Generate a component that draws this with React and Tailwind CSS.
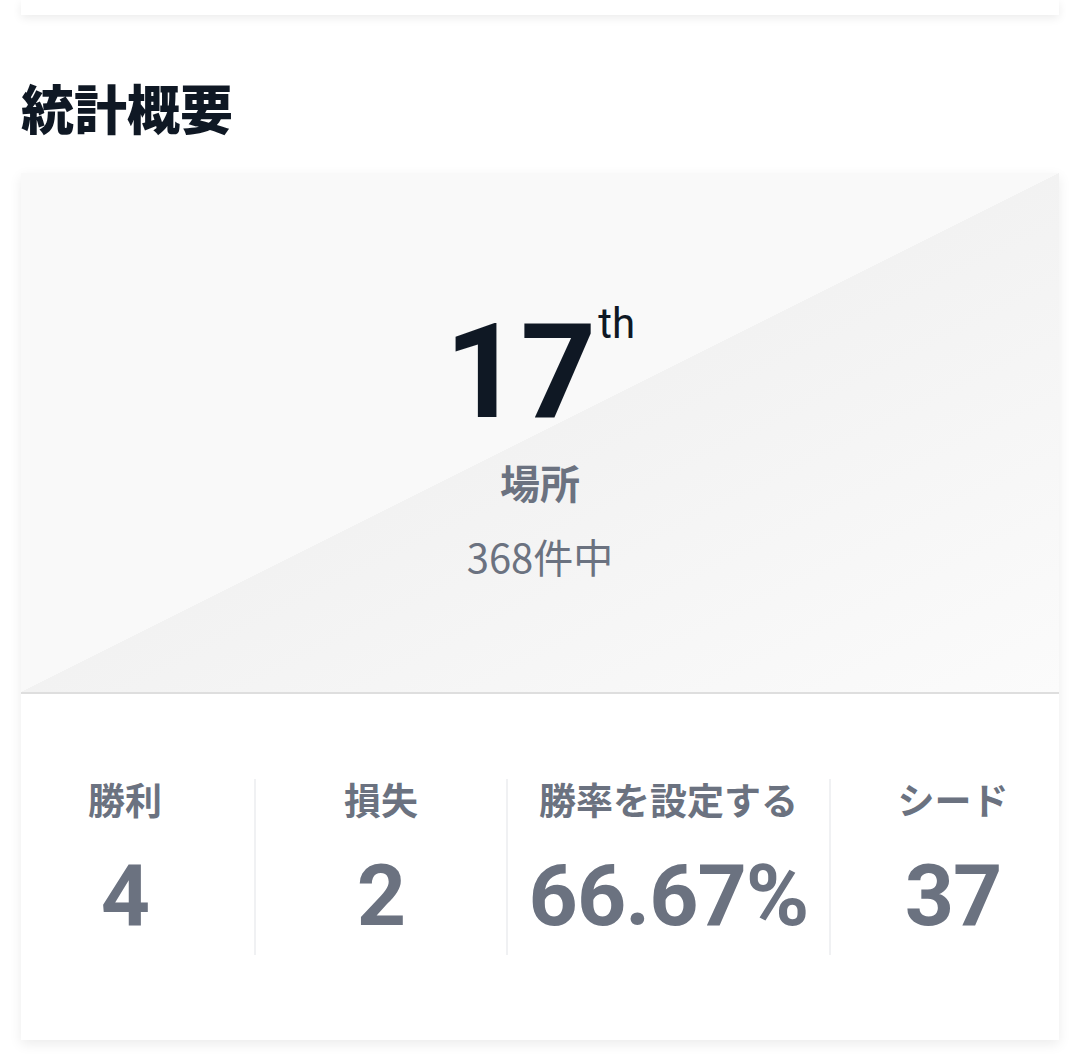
import React from 'react';

const stats = [
  { label: '勝利', value: '4', width: 'w-[258px]', first: true },
  { label: '損失', value: '2', width: 'w-[252px]' },
  { label: '勝率を設定する', value: '66.67%', width: 'w-[323px]' },
  { label: 'シード', value: '37', width: 'w-[246px]' },
];

const StatColumn = ({ stat }) => (
  <div
    className={`${stat.width} h-[176px] flex flex-col items-center ${
      stat.first ? '' : 'border-l-2 border-[#f0f1f3]'
    }`}
  >
    <div className="text-[37px] leading-[48px] font-bold text-[#6b7280]">{stat.label}</div>
    <div className="mt-[26px] text-[86px] leading-[86px] font-bold text-[#6b7280] tracking-[-1px]">
      {stat.value}
    </div>
  </div>
);

export default function App() {
  return (
    <div
      className="min-h-[1057px] bg-white"
      style={{ fontFamily: 'Roboto, "Noto Sans CJK JP", sans-serif' }}
    >
      {/* previous card (cut off) */}
      <div className="mx-[21px] h-[15px] bg-white shadow-[0_3px_10px_rgba(0,0,0,0.08)]" />

      <h2 className="mx-[21px] mt-[63px] text-[53px] leading-[68px] font-black text-[#0f1824]">
        統計概要
      </h2>

      {/* summary card */}
      <div className="mx-[21px] mt-[27px] bg-white shadow-[0_4px_12px_rgba(0,0,0,0.08)]">
        <div className="pt-[133px] pb-[112px] flex flex-col items-center border-b-2 border-[#dedede] bg-[linear-gradient(to_bottom_right,#f9f9f9_50%,#f2f2f2_50%,#fbfbfb_100%)]">
          <div className="flex items-start">
            <span className="text-[132px] leading-[132px] font-bold text-[#0f1824]">17</span>
            <span className="ml-[2px] -mt-[3px] text-[42px] leading-[42px] text-[#0f1824]">th</span>
          </div>
          <div className="mt-[24px] text-[40px] leading-[48px] font-bold text-[#6b7280]">場所</div>
          <div
            className="mt-[22px] text-[40px] leading-[48px] text-[#6b7280]"
            style={{ fontFamily: '"Noto Sans CJK JP", sans-serif' }}
          >
            368件中
          </div>
        </div>

        <div className="pt-[85px] pb-[85px]">
          <div className="-ml-[25px] -mr-[16px] flex">
            {stats.map((s) => (
              <StatColumn key={s.label} stat={s} />
            ))}
          </div>
        </div>
      </div>
    </div>
  );
}
